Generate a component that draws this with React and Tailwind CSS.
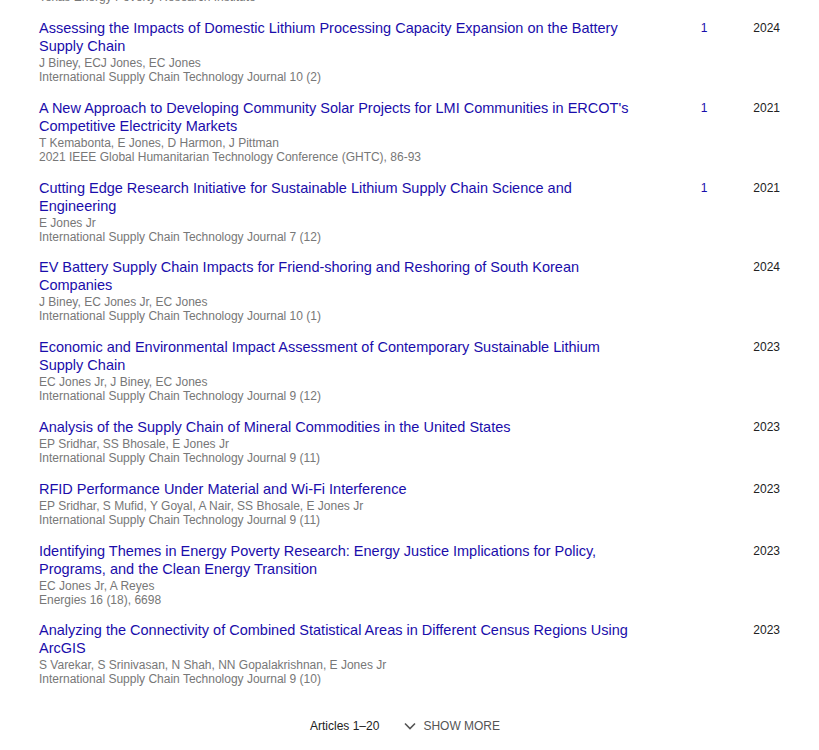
import React from "react";

const rows = [
  {
    title: "Assessing the Impacts of Domestic Lithium Processing Capacity Expansion on the Battery Supply Chain",
    authors: "J Biney, ECJ Jones, EC Jones",
    venue: "International Supply Chain Technology Journal 10 (2)",
    cited: "1",
    year: "2024",
  },
  {
    title: "A New Approach to Developing Community Solar Projects for LMI Communities in ERCOT's Competitive Electricity Markets",
    authors: "T Kemabonta, E Jones, D Harmon, J Pittman",
    venue: "2021 IEEE Global Humanitarian Technology Conference (GHTC), 86-93",
    cited: "1",
    year: "2021",
  },
  {
    title: "Cutting Edge Research Initiative for Sustainable Lithium Supply Chain Science and Engineering",
    authors: "E Jones Jr",
    venue: "International Supply Chain Technology Journal 7 (12)",
    cited: "1",
    year: "2021",
  },
  {
    title: "EV Battery Supply Chain Impacts for Friend-shoring and Reshoring of South Korean Companies",
    authors: "J Biney, EC Jones Jr, EC Jones",
    venue: "International Supply Chain Technology Journal 10 (1)",
    cited: "",
    year: "2024",
  },
  {
    title: "Economic and Environmental Impact Assessment of Contemporary Sustainable Lithium Supply Chain",
    authors: "EC Jones Jr, J Biney, EC Jones",
    venue: "International Supply Chain Technology Journal 9 (12)",
    cited: "",
    year: "2023",
  },
  {
    title: "Analysis of the Supply Chain of Mineral Commodities in the United States",
    authors: "EP Sridhar, SS Bhosale, E Jones Jr",
    venue: "International Supply Chain Technology Journal 9 (11)",
    cited: "",
    year: "2023",
  },
  {
    title: "RFID Performance Under Material and Wi-Fi Interference",
    authors: "EP Sridhar, S Mufid, Y Goyal, A Nair, SS Bhosale, E Jones Jr",
    venue: "International Supply Chain Technology Journal 9 (11)",
    cited: "",
    year: "2023",
  },
  {
    title: "Identifying Themes in Energy Poverty Research: Energy Justice Implications for Policy, Programs, and the Clean Energy Transition",
    authors: "EC Jones Jr, A Reyes",
    venue: "Energies 16 (18), 6698",
    cited: "",
    year: "2023",
  },
  {
    title: "Analyzing the Connectivity of Combined Statistical Areas in Different Census Regions Using ArcGIS",
    authors: "S Varekar, S Srinivasan, N Shah, NN Gopalakrishnan, E Jones Jr",
    venue: "International Supply Chain Technology Journal 9 (10)",
    cited: "",
    year: "2023",
  },
];

export default function App() {
  return (
    <div
      className="w-[819px] h-[750px] overflow-hidden bg-white"
      style={{ fontFamily: '"Liberation Sans", Arial, sans-serif' }}
    >
      <div className="pl-[39px] mt-[-10px] text-[12px] leading-[14px] text-[#777]">
        Texas Energy Poverty Research Institute
      </div>
      <div className="mt-[7px]">
        {rows.map((r, i) => (
          <div key={i} className="flex items-start pl-[39px] py-[7.92px]">
            <div className="w-[606px]">
              <a className="block text-[14.5px] leading-[18px] text-[#1a0dab] cursor-pointer">
                {r.title}
              </a>
              <div className="text-[12px] leading-[14px] pt-[1px] -mb-[1px] text-[#777]">{r.authors}</div>
              <div className="text-[12px] leading-[14px] pt-[1px] -mb-[1px] text-[#777]">{r.venue}</div>
            </div>
            <div className="ml-[45px] w-[28px] text-center text-[12px] leading-[18px] text-[#1a0dab]">
              {r.cited}
            </div>
            <div className="w-[62px] text-right text-[12px] leading-[18px] text-[#222]">
              {r.year}
            </div>
          </div>
        ))}
      </div>
      <div className="flex items-center pl-[310px] mt-[23px] text-[12px] leading-[20px]">
        <span className="text-[#222]">Articles 1–20</span>
        <button className="flex items-center ml-[24px] text-[#555] uppercase">
          <svg width="14" height="14" viewBox="0 0 14 14" className="mr-[6px]">
            <path d="M2 4.5 L7 9.5 L12 4.5" fill="none" stroke="#555" strokeWidth="1.6" />
          </svg>
          <span>Show more</span>
        </button>
      </div>
    </div>
  );
}
